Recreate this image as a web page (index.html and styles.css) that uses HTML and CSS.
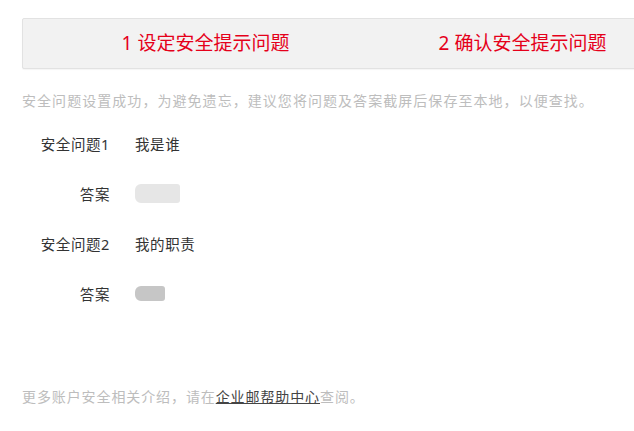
FILE: index.html
```html
<!DOCTYPE html>
<html lang="zh-CN">
<head>
  <meta charset="UTF-8">
  <meta name="viewport" content="width=device-width, initial-scale=1.0">
  <title>设置安全问题</title>
  <link rel="stylesheet" href="styles.css">
</head>
<body>
  <div class="page">
    <div class="steps">
      <div class="step">1 设定安全提示问题</div>
      <div class="step">2 确认安全提示问题</div>
    </div>

    <p class="hint">安全问题设置成功，为避免遗忘，建议您将问题及答案截屏后保存至本地，以便查找。</p>

    <div class="qa">
      <div class="qa-row">
        <span class="qa-label">安全问题1</span>
        <span class="qa-value">我是谁</span>
      </div>
      <div class="qa-row">
        <span class="qa-label">答案</span>
        <span class="qa-value"><span class="masked masked-light"></span></span>
      </div>
      <div class="qa-row">
        <span class="qa-label">安全问题2</span>
        <span class="qa-value">我的职责</span>
      </div>
      <div class="qa-row">
        <span class="qa-label">答案</span>
        <span class="qa-value"><span class="masked masked-dark"></span></span>
      </div>
    </div>

    <p class="footer">更多账户安全相关介绍，请在<a href="#" class="help-link">企业邮帮助中心</a>查阅。</p>
  </div>
</body>
</html>
```

FILE: styles.css
```css
body {
  margin: 0;
  overflow: hidden;
  background-color: #fff;
  font-family: "Noto Sans", "Noto Sans CJK SC", sans-serif;
  color: #333;
}

.page {
  padding: 18px 0 0 22px;
}

.steps {
  display: flex;
  width: 660px;
  height: 49px;
  padding-left: 24px;
  background-color: #f2f2f2;
  border: 1px solid #e2e2e2;
  border-radius: 2px;
  box-shadow: 0 1px 1px rgba(0, 0, 0, 0.04);
}

.step {
  width: 317px;
  text-align: center;
  line-height: 49px;
  font-size: 19px;
  color: #e5001a;
}

.hint {
  margin: 22px 0 0;
  line-height: 20px;
  font-size: 14px;
  letter-spacing: 1.05px;
  color: #bdbdbd;
}

.qa {
  margin-top: 7px;
}

.qa-row {
  display: flex;
  align-items: center;
  height: 50px;
  font-size: 14.5px;
  letter-spacing: 0.6px;
}

.qa-label {
  width: 88px;
  text-align: right;
  color: #333;
}

.qa-value {
  margin-left: 25px;
  color: #333;
}

.masked {
  display: block;
  border-radius: 6px 3px 3px 6px;
  filter: blur(0.6px);
}

.masked-light {
  width: 45px;
  height: 19px;
  background-color: #e6e6e6;
}

.masked-dark {
  width: 30px;
  height: 15px;
  background-color: #c6c6c6;
}

.footer {
  margin: 69px 0 0;
  line-height: 20px;
  font-size: 14px;
  letter-spacing: 0.9px;
  color: #bdbdbd;
}

.help-link {
  color: #444;
  text-decoration: underline;
}
```
